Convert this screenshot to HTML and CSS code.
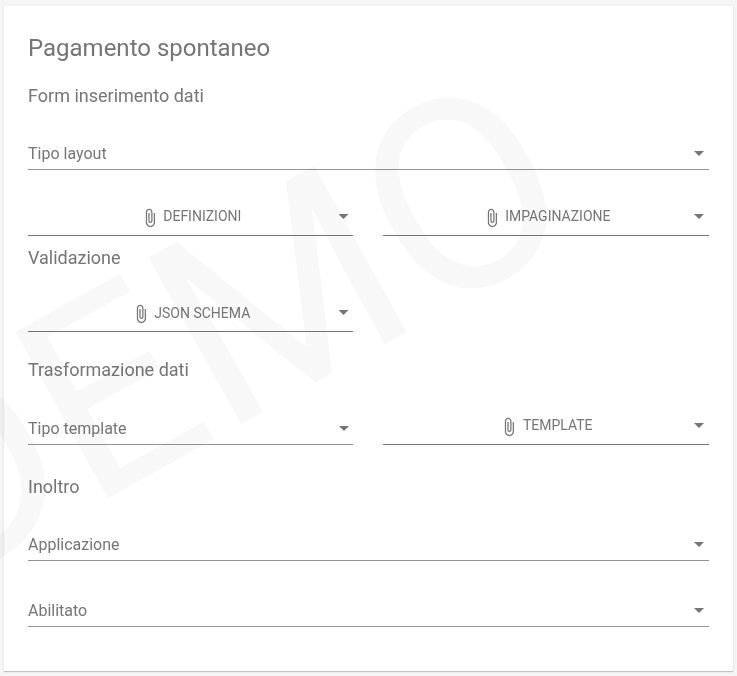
FILE: index.html
```html
<!DOCTYPE html>
<html lang="it">
<head>
<meta charset="utf-8">
<title>Pagamento spontaneo</title>
<link rel="stylesheet" href="styles.css">
</head>
<body>
<svg width="0" height="0" class="defs">
  <symbol id="clip" viewBox="0 0 24 24"><path d="M16.5 6v11.5c0 2.21-1.79 4-4 4s-4-1.79-4-4V5a2.5 2.5 0 0 1 5 0v10.5c0 .55-.45 1-1 1s-1-.45-1-1V6H10v9.5a2.5 2.5 0 0 0 5 0V5c0-2.21-1.79-4-4-4S7 2.790 7 5v12.500c0 3.040 2.460 5.500 5.500 5.500s5.500-2.460 5.500-5.500V6h-1.500z"/></symbol>
</svg>
<main class="card">
  <h1 class="title">Pagamento spontaneo</h1>
  <h2 class="section">Form inserimento dati</h2>
  <div class="select"><span>Tipo layout</span><i class="arrow"></i></div>
  <div class="row row-first">
    <div class="file"><svg class="clip"><use href="#clip"/></svg><span class="label">DEFINIZIONI</span><i class="arrow"></i></div>
    <div class="file"><svg class="clip"><use href="#clip"/></svg><span class="label">IMPAGINAZIONE</span><i class="arrow"></i></div>
  </div>
  <h2 class="section section-validation">Validazione</h2>
  <div class="row row-schema">
    <div class="file"><svg class="clip"><use href="#clip"/></svg><span class="label">JSON SCHEMA</span><i class="arrow"></i></div>
  </div>
  <h2 class="section section-transform">Trasformazione dati</h2>
  <div class="row row-template">
    <div class="select"><span>Tipo template</span><i class="arrow"></i></div>
    <div class="file"><svg class="clip"><use href="#clip"/></svg><span class="label">TEMPLATE</span><i class="arrow"></i></div>
  </div>
  <h2 class="section section-forward">Inoltro</h2>
  <div class="select"><span>Applicazione</span><i class="arrow"></i></div>
  <div class="select select-last"><span>Abilitato</span><i class="arrow"></i></div>
</main>
<svg class="watermark" viewBox="0 0 737 676"><text transform="translate(-65 594.5) rotate(-29.1)">DEMO</text></svg>
</body>
</html>
```

FILE: styles.css
```css
* {
  box-sizing: border-box;
}

body {
  margin: 0;
  padding: 6px 4px 5px;
  height: 676px;
  overflow: hidden;
  position: relative;
  background: #f5f5f5;
  color: #757575;
  font-family: Roboto, "Liberation Sans", sans-serif;
  -webkit-font-smoothing: antialiased;
}

.defs {
  display: none;
}

.card {
  height: 665px;
  padding: 26px 24px 0;
  background: #fff;
  box-shadow: 0 1px 1px rgba(0, 0, 0, .2), 0 0 2px rgba(0, 0, 0, .06);
  will-change: transform;
}

.title {
  margin: 0;
  font-size: 24px;
  line-height: 32px;
  font-weight: 400;
}

.section {
  margin: 20px 0 0;
  font-size: 18px;
  line-height: 24px;
  font-weight: 400;
}

.section-validation { margin-top: 10px; }
.section-transform { margin-top: 26px; }
.section-forward { margin-top: 30px; }

.row {
  display: grid;
  grid-template-columns: 325px 326px;
  column-gap: 30px;
  height: 62px;
}

.row-first { height: 66px; }
.row-template { height: 63px; }

.select,
.file {
  display: flex;
  align-items: flex-end;
}

.select {
  height: 62px;
  justify-content: space-between;
  padding-bottom: 5px;
  border-bottom: 1px solid #949494;
  font-size: 16px;
  line-height: 20px;
}

.row .select { height: 100%; }
.select-last { height: 66px; }

.file {
  position: relative;
  justify-content: center;
  padding-bottom: 7px;
  border-bottom: 1px solid #757575;
  font-size: 14px;
}

.label {
  margin: 0 0 2px 3.600px;
  line-height: 20px;
}

.row-schema .label { margin-bottom: 1px; }

.clip {
  width: 20px;
  height: 20px;
  fill: currentColor;
}

.arrow {
  width: 10px;
  height: 5px;
  margin: 0 5px 8px 0;
  background: #757575;
  clip-path: polygon(0 0, 100% 0, 50% 100%);
}

.row .select .arrow { margin-right: 4px; }

.file .arrow {
  position: absolute;
  right: 5px;
  bottom: 16px;
  margin: 0;
}

.file:first-child .arrow { right: 4.500px; }

.watermark {
  position: absolute;
  left: 0;
  top: 0;
  width: 737px;
  height: 676px;
  pointer-events: none;
  font-size: 268px;
  fill: rgba(0, 0, 0, .027);
}
```
